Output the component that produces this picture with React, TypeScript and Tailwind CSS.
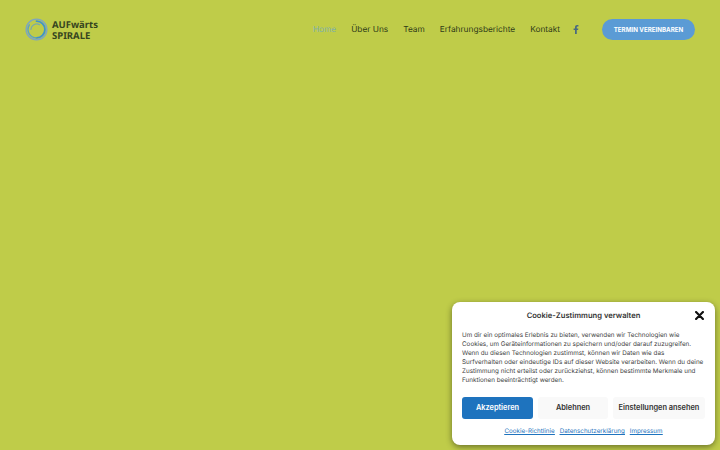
const navItems = ['Über Uns', 'Team', 'Erfahrungsberichte', 'Kontakt'];

function Logo() {
  return (
    <div className="mt-[0.5px] flex items-center gap-[4px]">
      <svg width="23" height="23" viewBox="0 0 24 24" fill="none" strokeLinecap="round">
        <circle cx="12" cy="12" r="10.8" stroke="#7fa6bf" strokeWidth="1.5" />
        <path d="M12 3.2a8.800 8.800 0 0 1 8.800 8.800c0 4.900-3.900 8.800-8.800 8.800" stroke="#3f93c9" strokeWidth="1.900" />
        <path d="M12 20.800A8.800 8.800 0 0 1 4.600 7.200" stroke="#5ba0c0" strokeWidth="1.400" />
        <path d="M6.200 12a6 6 0 0 1 9-5" stroke="#7aa8a8" strokeWidth="1.200" />
      </svg>
      <div className="font-['Noto_Sans',sans-serif] text-[9.5px] leading-[11px] font-bold text-[#36451f]">
        <div>AUFwärts</div>
        <div>SPIRALE</div>
      </div>
    </div>
  );
}

function Header() {
  return (
    <header className="flex items-start justify-between px-[25px] pt-[17.5px]">
      <Logo />
      <nav className="flex h-[24px] items-center gap-[15px] text-[8.3px] leading-[24px] text-[#2f3b18]">
        <a className="text-[#7fb0a8]">Home</a>
        {navItems.map((item) => (
          <a key={item}>{item}</a>
        ))}
        <svg className="-ml-[2px]" width="6" height="9" viewBox="0 0 320 512" fill="#4a6a80">
          <path d="M279 288l14-93h-89v-60c0-25 12-50 52-50h41V6S260 0 225 0c-73 0-121 44-121 125v70H23v93h81v224h100V288z" />
        </svg>
        <button className="ml-[8px] h-[21px] w-[93px] rounded-full bg-[#5b9bd5] text-[6.2px] leading-[21px] font-bold text-white">
          TERMIN VEREINBAREN
        </button>
      </nav>
    </header>
  );
}

function CookieBanner() {
  return (
    <div className="absolute top-[302px] left-[452px] h-[143px] w-[263px] rounded-[8px] bg-white px-[10px] pt-[7px] shadow-[0_2px_6px_rgba(0,0,0,0.45)]">
      <div className="relative text-center text-[7.6px] leading-[13px] font-semibold text-[#333]">
        Cookie-Zustimmung verwalten
        <svg className="absolute top-[2px] right-[1px]" width="9" height="9" viewBox="0 0 10 10" stroke="#111" strokeWidth="2.4" strokeLinecap="round">
          <path d="M1.2 1.2l7.6 7.6M8.800 1.200l-7.600 7.600" />
        </svg>
      </div>
      <p className="mt-[9px] text-[6.3px] leading-[9px] whitespace-nowrap text-[#444]">
        Um dir ein optimales Erlebnis zu bieten, verwenden wir Technologien wie
        <br />
        Cookies, um Geräteinformationen zu speichern und/oder darauf zuzugreifen.
        <br />
        Wenn du diesen Technologien zustimmst, können wir Daten wie das
        <br />
        Surfverhalten oder eindeutige IDs auf dieser Website verarbeiten. Wenn du deine
        <br />
        Zustimmung nicht erteilst oder zurückziehst, können bestimmte Merkmale und
        <br />
        Funktionen beeinträchtigt werden.
      </p>
      <div className="mt-[12px] flex gap-[5px] text-[7.4px] leading-[22px] font-semibold">
        <button className="h-[22px] w-[71px] rounded-[3px] bg-[#1e73be] text-white">Akzeptieren</button>
        <button className="h-[22px] w-[70px] rounded-[3px] bg-[#f9f9f9] text-[#333]">Ablehnen</button>
        <button className="h-[22px] w-[92px] rounded-[3px] bg-[#f9f9f9] text-[#333]">Einstellungen ansehen</button>
      </div>
      <div className="mt-[6px] flex justify-center gap-[5px] text-[6.25px] leading-[12px] text-[#1e73be] underline">
        <a>Cookie-Richtlinie</a>
        <a>Datenschutzerklärung</a>
        <a>Impressum</a>
      </div>
    </div>
  );
}

export default function App() {
  return (
    <div className="relative h-[450px] w-[720px] overflow-hidden bg-[#bfcc49] font-['Inter',sans-serif] [text-rendering:geometricPrecision]">
      <Header />
      <CookieBanner />
    </div>
  );
}
